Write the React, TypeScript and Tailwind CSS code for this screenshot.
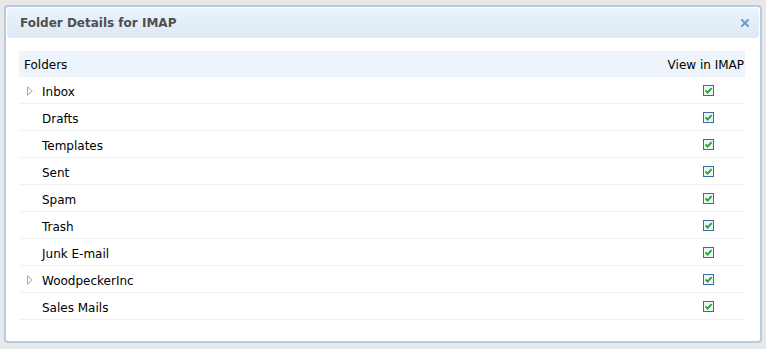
import React from "react";

const folders = [
  { name: "Inbox", expandable: true },
  { name: "Drafts", expandable: false },
  { name: "Templates", expandable: false },
  { name: "Sent", expandable: false },
  { name: "Spam", expandable: false },
  { name: "Trash", expandable: false },
  { name: "Junk E-mail", expandable: false },
  { name: "WoodpeckerInc", expandable: true },
  { name: "Sales Mails", expandable: false },
];

function Triangle() {
  return (
    <svg width="6" height="10" viewBox="0 0 6 10" className="block">
      <path d="M0.5 0.8 L5.3 5 L0.5 9.2 Z" fill="#fafafa" stroke="#a8a8a8" strokeWidth="1" />
    </svg>
  );
}

function Check() {
  return (
    <svg width="11" height="11" viewBox="0 0 11 11" className="block">
      <rect x="0.5" y="0.5" width="10" height="10" fill="#eef3f8" stroke="#3c6d9c" strokeWidth="1" />
      <path d="M2.6 5.4 L4.6 7.6 L8.6 3.2" fill="none" stroke="#22a822" strokeWidth="1.9" />
    </svg>
  );
}

function Close() {
  return (
    <svg width="8" height="8" viewBox="0 0 8 8" className="block">
      <path d="M1 1 L7 7 M7 1 L1 7" stroke="#6c9bcb" strokeWidth="2" strokeLinecap="square" />
    </svg>
  );
}

export default function App() {
  return (
    <div
      className="w-[766px] h-[349px] bg-[#e8e8e8] pt-[5px] pl-[4px] overflow-hidden"
      style={{ fontFamily: '"DejaVu Sans", Verdana, sans-serif' }}
    >
      <div className="w-[758px] h-[338px] bg-white border-2 border-[#b3cce3] rounded-[4px] p-px">
        <div className="h-[30px] rounded-[4px] bg-gradient-to-b from-[#ebf3fb] to-[#dde9f6] flex items-center justify-between pl-[13px] pr-[10px]">
          <span className="text-[12px] font-bold text-[#4f4f4f] leading-none">Folder Details for IMAP</span>
          <Close />
        </div>
        <div className="mt-[13px] ml-[12px] w-[726px]">
          <div className="h-[26px] bg-[#eef4fc] flex items-center justify-between pl-[5px] pr-px pt-[2px] text-[12px] text-black">
            <span>Folders</span>
            <span>View in IMAP</span>
          </div>
          {folders.map((f) => (
            <div
              key={f.name}
              className="h-[27px] border-b border-[#eef1f6] flex items-center text-[12px] text-black"
            >
              <div className="w-[23px] pl-[8px] pt-[2px] flex items-center">{f.expandable && <Triangle />}</div>
              <span className="flex-1 pt-[3px]">{f.name}</span>
              <div className="mr-[31px]">
                <Check />
              </div>
            </div>
          ))}
        </div>
      </div>
    </div>
  );
}
